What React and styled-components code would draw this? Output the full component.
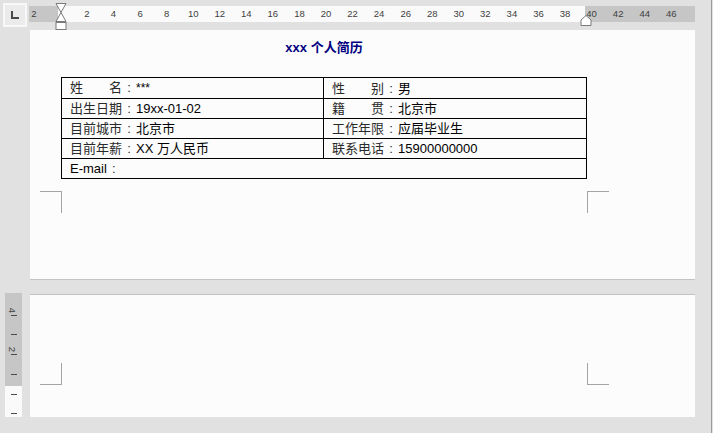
import React from "react";
import styled, { createGlobalStyle } from "styled-components";

const GlobalStyle = createGlobalStyle`
  html, body {
    margin: 0;
    padding: 0;
    background: #e1e1e1;
  }
  body {
    font-family: "Liberation Sans", "Noto Sans CJK SC", sans-serif;
  }
`;

// ruler scale (px per unit and offset from the ruler strip's left edge)
const UNIT = 13.28;
const ORIGIN = 31.4;
const rulerNumbers = [-2, 2, 4, 6, 8, 10, 12, 14, 16, 18, 20, 22, 24, 26, 28, 30, 32, 34, 36, 38, 40, 42, 44, 46];
const vTicks = [22, 41, 61, 81, 101, 120];
const vNumbers = [
  { label: "4", top: 13 },
  { label: "2", top: 52 },
];

const rows = [
  [
    { label: "姓　　名", value: "***", small: true },
    { label: "性　　别", value: "男" },
  ],
  [
    { label: "出生日期", value: "19xx-01-02" },
    { label: "籍　　贯", value: "北京市" },
  ],
  [
    { label: "目前城市", value: "北京市" },
    { label: "工作年限", value: "应届毕业生" },
  ],
  [
    { label: "目前年薪", value: "XX 万人民币" },
    { label: "联系电话", value: "15900000000" },
  ],
];

const App = () => {
  return (
    <Frame>
      <GlobalStyle />
      <RulerRow>
        <CornerBox>
          <svg width="10" height="10" viewBox="0 0 10 10">
            <path d="M2 1 V8 H9" stroke="#4a4a4a" strokeWidth="2" fill="none" />
          </svg>
        </CornerBox>
        <HRuler>
          <RulerZone $margin $w={29} />
          <RulerZone $w={527} />
          <RulerZone $margin $w={110} />
          {rulerNumbers.map((n) => (
            <RulerNum key={n} style={{ left: ORIGIN + n * UNIT }}>
              {Math.abs(n)}
            </RulerNum>
          ))}
          <LeftIndent>
            <svg width="12" height="28" viewBox="0 0 12 28">
              <path d="M1 0.5 H11 L6 9.5 Z" fill="#fff" stroke="#7a7a7a" />
              <path d="M6 9.5 L11 18.5 H1 Z" fill="#fff" stroke="#7a7a7a" />
              <rect x="1" y="19.5" width="10" height="7" fill="#fff" stroke="#7a7a7a" />
            </svg>
          </LeftIndent>
          <RightIndent>
            <svg width="12" height="11" viewBox="0 0 12 11">
              <path d="M6 0.5 L11 5 V10.5 H1 V5 Z" fill="#fff" stroke="#7a7a7a" />
            </svg>
          </RightIndent>
        </HRuler>
      </RulerRow>

      <Page $edge="bottom">
        <Content>
          <Title>xxx 个人简历</Title>
          <Resume>
            <colgroup>
              <col style={{ width: 262 }} />
              <col />
            </colgroup>
            <tbody>
              {rows.map((row, i) => (
                <tr key={i}>
                  {row.map((cell) => (
                    <Cell key={cell.label}>
                      <Label>{cell.label}</Label>
                      <Colon>:</Colon>
                      <Value $small={cell.small}>{cell.value}</Value>
                    </Cell>
                  ))}
                </tr>
              ))}
              <tr>
                <Cell colSpan={2}>
                  <Value>E-mail</Value>
                  <Colon>:</Colon>
                </Cell>
              </tr>
            </tbody>
          </Resume>
        </Content>
        <MarksRow $gap={12}>
          <Mark $v="top" $h="left" />
          <Mark $v="top" $h="right" />
        </MarksRow>
      </Page>

      <PageRow>
        <VRuler>
          <VZone $margin $h={93} />
          <VZone $h={31} />
          {vTicks.map((t) => (
            <VTick key={t} style={{ top: t }} />
          ))}
          {vNumbers.map((n) => (
            <VNum key={n.label} style={{ top: n.top }}>
              {n.label}
            </VNum>
          ))}
        </VRuler>
        <Page $edge="top">
          <MarksRow $gap={68}>
            <Mark $v="bottom" $h="left" />
            <Mark $v="bottom" $h="right" />
          </MarksRow>
        </Page>
      </PageRow>
    </Frame>
  );
};

const Frame = styled.div`
  width: 712px;
  height: 433px;
  box-sizing: border-box;
  background: #e1e1e1;
  border-right: 1px solid #9c9c9c;
  overflow: hidden;
`;

const RulerRow = styled.div`
  display: flex;
  align-items: flex-start;
  height: 30px;
`;

const CornerBox = styled.div`
  margin: 3px 0 0 3px;
  width: 24px;
  height: 24px;
  box-sizing: border-box;
  background: #ebebeb;
  border: 2px solid #f8f8f8;
  display: flex;
  align-items: center;
  justify-content: center;
`;

const HRuler = styled.div`
  position: relative;
  margin: 6px 0 0 2px;
  width: 666px;
  height: 16px;
  display: flex;
`;

const RulerZone = styled.div`
  width: ${(p) => p.$w}px;
  height: 100%;
  background: ${(p) => (p.$margin ? "#c6c6c6" : "#fafafa")};
`;

const RulerNum = styled.span`
  position: absolute;
  top: 0;
  line-height: 16px;
  font-size: 9.5px;
  color: #3e3e3e;
  transform: translateX(-50%);
`;

const LeftIndent = styled.div`
  position: absolute;
  left: 26px;
  top: -3px;
  line-height: 0;
`;

const RightIndent = styled.div`
  position: absolute;
  left: 551px;
  top: 9px;
  line-height: 0;
`;

const Page = styled.div`
  margin-left: ${(p) => (p.$edge === "top" ? 8 : 30)}px;
  margin-top: ${(p) => (p.$edge === "top" ? 1 : 0)}px;
  width: 665px;
  height: ${(p) => (p.$edge === "top" ? 123 : 250)}px;
  box-sizing: border-box;
  background: #fcfcfc;
  padding: 10px 0 0 10px;
  ${(p) =>
    p.$edge === "top"
      ? "border-top: 1px solid #c3c3c3; padding-top: 0;"
      : "border-bottom: 1px solid #c3c3c3;"}
`;

const Content = styled.div`
  margin-left: 21px;
  width: 526px;
`;

const Title = styled.div`
  text-align: center;
  font-size: 13px;
  font-weight: bold;
  line-height: 16px;
  color: #00007f;
`;

const Resume = styled.table`
  margin-top: 21px;
  width: 526px;
  border-collapse: collapse;
  table-layout: fixed;
`;

const Cell = styled.td`
  height: 19px;
  padding: 0 0 0 8px;
  border: 1px solid #000;
  font-size: 13px;
  line-height: 19px;
  white-space: nowrap;
  vertical-align: middle;
`;

const Label = styled.span`
  color: #2a2a2a;
`;

const Colon = styled.span`
  display: inline-block;
  width: 14px;
  text-align: center;
  color: #2a2a2a;
`;

const Value = styled.span`
  color: #000;
  font-size: ${(p) => (p.$small ? "12px" : "13px")};
`;

const MarksRow = styled.div`
  display: flex;
  justify-content: space-between;
  width: 569px;
  margin-top: ${(p) => p.$gap}px;
`;

const Mark = styled.div`
  width: 22px;
  height: 22px;
  box-sizing: border-box;
  border-${(p) => p.$v}: 1px solid #a4a4a4;
  border-${(p) => (p.$h === "left" ? "right" : "left")}: 1px solid #a4a4a4;
`;

const PageRow = styled.div`
  display: flex;
  align-items: flex-start;
  margin-top: 13px;
`;

const VRuler = styled.div`
  position: relative;
  margin-left: 5px;
  width: 17px;
  height: 124px;
  display: flex;
  flex-direction: column;
`;

const VZone = styled.div`
  height: ${(p) => p.$h}px;
  background: ${(p) => (p.$margin ? "#c6c6c6" : "#fafafa")};
`;

const VTick = styled.div`
  position: absolute;
  left: 6px;
  width: 6px;
  height: 1px;
  background: #4a4a4a;
`;

const VNum = styled.span`
  position: absolute;
  left: 5px;
  font-size: 9.5px;
  line-height: 9px;
  color: #3e3e3e;
  transform: rotate(90deg);
`;

export default App;
